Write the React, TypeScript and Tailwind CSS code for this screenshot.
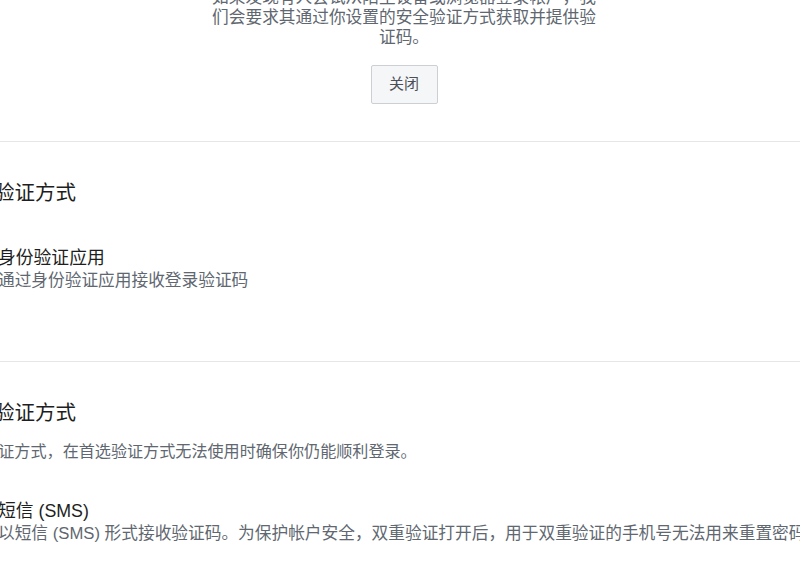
import React from "react";

const font = { fontFamily: '"Liberation Sans", "Noto Sans CJK SC", sans-serif' };

type Method = { title: string; desc: string };

function MethodRow({ method }: { method: Method }) {
  return (
    <div className="pl-[45px]">
      <div className="text-[17.8px] leading-[24px] text-[#1c1e21] whitespace-nowrap">{method.title}</div>
      <div className="text-[16.7px] leading-[22px] text-[#606770] whitespace-nowrap">{method.desc}</div>
    </div>
  );
}

function Section({
  title,
  desc,
  methods,
  gap,
}: {
  title: string;
  desc?: string;
  methods: Method[];
  gap: string;
}) {
  return (
    <section className="pt-[37px] pb-[69px] border-t border-[#e4e6e9]">
      <h2 className="text-[20.5px] leading-[28px] text-[#1c1e21] whitespace-nowrap">{title}</h2>
      {desc && (
        <p className="mt-[13px] -ml-[3px] text-[16.1px] leading-[22px] text-[#606770] whitespace-nowrap">{desc}</p>
      )}
      <div className={gap}>
        {methods.map((m) => (
          <MethodRow key={m.title} method={m} />
        ))}
      </div>
    </section>
  );
}

export default function App() {
  return (
    <div className="w-[800px] h-[562px] overflow-hidden bg-white" style={font}>
      <div className="w-[902px] -ml-[47px] -mt-[12px]">
        {/* login alert notice */}
        <div className="flex flex-col items-center pb-[37px]">
          <p className="w-[388px] text-center text-[16.7px] leading-[20px] text-[#606770]">
            如果发现有人尝试从陌生设备或浏览器登录帐户，我们会要求其通过你设置的安全验证方式获取并提供验证码。
          </p>
          <button
            type="button"
            className="mt-[17px] h-[39px] w-[67px] rounded-[2px] border border-[#ccd0d5] bg-[#f5f6f7] text-[15px] text-[#4b4f56]"
          >
            关闭
          </button>
        </div>

        <Section
          title="首选验证方式"
          gap="mt-[39px]"
          methods={[{ title: "身份验证应用", desc: "通过身份验证应用接收登录验证码" }]}
        />

        <Section
          title="备用验证方式"
          desc="备用验证方式，在首选验证方式无法使用时确保你仍能顺利登录。"
          gap="mt-[37px]"
          methods={[
            {
              title: "短信 (SMS)",
              desc: "以短信 (SMS) 形式接收验证码。为保护帐户安全，双重验证打开后，用于双重验证的手机号无法用来重置密码。",
            },
          ]}
        />
      </div>
    </div>
  );
}
